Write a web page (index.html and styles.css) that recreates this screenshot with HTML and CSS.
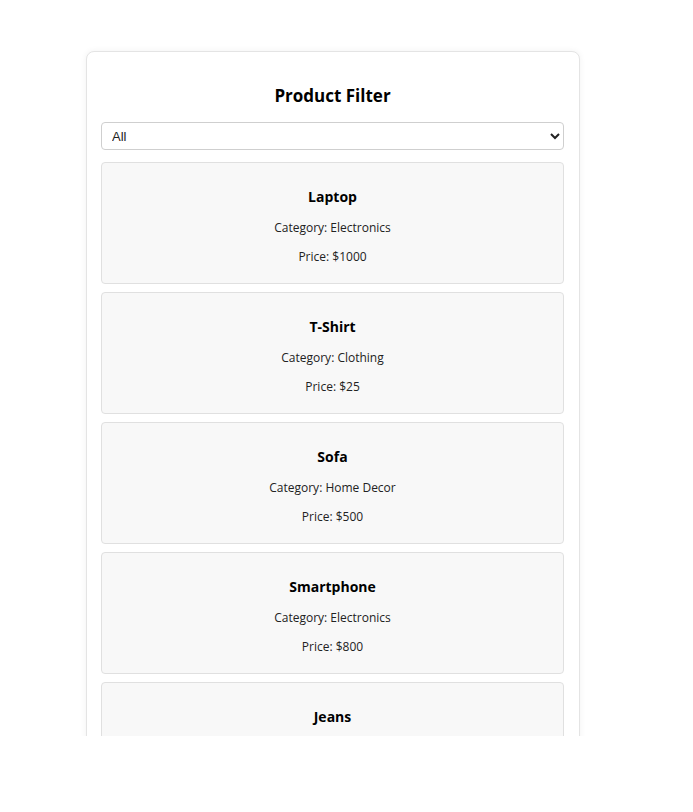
FILE: index.html
```html
<!DOCTYPE html>
<html>
<head>
<meta charset="utf-8">
<link rel="stylesheet" href="styles.css">
</head>
<body>
<div class="viewport">
  <div class="container">
    <h2 class="title">Product Filter</h2>
    <select class="filter">
      <option>All</option>
      <option>Electronics</option>
      <option>Clothing</option>
      <option>Home Decor</option>
    </select>
    <div class="list">
      <div class="card">
        <h3 class="name">Laptop</h3>
        <p class="info">Category: Electronics</p>
        <p class="info">Price: $1000</p>
      </div>
      <div class="card">
        <h3 class="name">T-Shirt</h3>
        <p class="info">Category: Clothing</p>
        <p class="info">Price: $25</p>
      </div>
      <div class="card">
        <h3 class="name">Sofa</h3>
        <p class="info">Category: Home Decor</p>
        <p class="info">Price: $500</p>
      </div>
      <div class="card">
        <h3 class="name">Smartphone</h3>
        <p class="info">Category: Electronics</p>
        <p class="info">Price: $800</p>
      </div>
      <div class="card">
        <h3 class="name">Jeans</h3>
        <p class="info">Category: Clothing</p>
        <p class="info">Price: $50</p>
      </div>
    </div>
  </div>
</div>
</body>
</html>
```
FILE: styles.css
```css
html, body {
  margin: 0;
  padding: 0;
  background: #ffffff;
}
.viewport {
  height: 736px;
  overflow: hidden;
  padding-top: 51px;
  box-sizing: border-box;
}
.container {
  width: 494px;
  box-sizing: border-box;
  margin-left: 86px;
  border: 1px solid #e4e4e4;
  border-radius: 8px;
  box-shadow: 0 0 6px rgba(0, 0, 0, 0.06);
  padding: 31px 15px 20px 14px;
  font-family: "Open Sans", "Noto Sans", sans-serif;
  background: #fff;
}
.title {
  margin: 0 0 14px;
  text-align: center;
  font-size: 17px;
  line-height: 25px;
  font-weight: 700;
  color: #000;
}
.filter {
  display: block;
  width: 100%;
  height: 28px;
  box-sizing: border-box;
  border: 1px solid #cfcfcf;
  border-radius: 4px;
  padding: 0 6px;
  font-family: "Liberation Sans", Arial, sans-serif;
  font-size: 13px;
  color: #222;
  background: #fff;
  margin-bottom: 12px;
}
.list {
  display: flex;
  flex-direction: column;
  gap: 8.5px;
}
.card {
  border: 1px solid #e0e0e0;
  border-radius: 4px;
  background: #f8f8f8;
  padding: 6px 10px;
  text-align: center;
}
.name {
  margin: 16.5px 0 12px;
  font-size: 14px;
  line-height: 21px;
  font-weight: 700;
  color: #000;
}
.info {
  margin: 12px 0;
  font-size: 12px;
  line-height: 17px;
  color: #222;
}
```
